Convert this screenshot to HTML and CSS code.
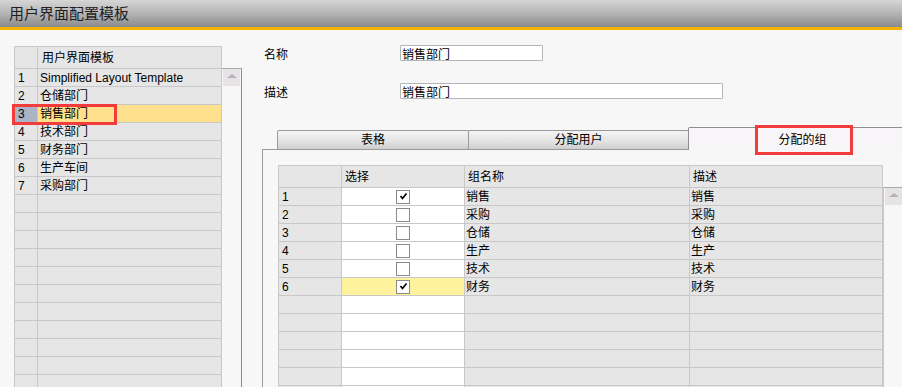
FILE: index.html
```html
<!DOCTYPE html>
<html>
<head>
  <title>用户界面配置模板</title>
  <link rel="stylesheet" href="styles.css">
</head>
<body>
  <div class="window">
    <div class="titlebar">用户界面配置模板</div>

    <div class="content">
      <div class="template-list">
        <div class="list-grid">
          <div class="cell head"></div>
          <div class="cell head name">用户界面模板</div>

          <div class="cell num">1</div><div class="cell name">Simplified Layout Template</div>
          <div class="cell num">2</div><div class="cell name">仓储部门</div>
          <div class="cell num selected-num">3</div><div class="cell name selected">销售部门</div>
          <div class="cell num">4</div><div class="cell name">技术部门</div>
          <div class="cell num">5</div><div class="cell name">财务部门</div>
          <div class="cell num">6</div><div class="cell name">生产车间</div>
          <div class="cell num">7</div><div class="cell name">采购部门</div>
          <div class="cell num"></div><div class="cell name"></div>
          <div class="cell num"></div><div class="cell name"></div>
          <div class="cell num"></div><div class="cell name"></div>
          <div class="cell num"></div><div class="cell name"></div>
          <div class="cell num"></div><div class="cell name"></div>
          <div class="cell num"></div><div class="cell name"></div>
          <div class="cell num"></div><div class="cell name"></div>
          <div class="cell num"></div><div class="cell name"></div>
          <div class="cell num"></div><div class="cell name"></div>
          <div class="cell num"></div><div class="cell name"></div>
          <div class="cell num"></div><div class="cell name"></div>
        </div>
        <div class="scroll-frame">
          <div class="scroll-btn"><span class="arrow-up"></span></div>
        </div>
      </div>

      <div class="details">
        <div class="field-row">
          <span class="field-label">名称</span>
          <input class="field-input short" type="text" value="销售部门">
        </div>
        <div class="field-row">
          <span class="field-label">描述</span>
          <input class="field-input long" type="text" value="销售部门">
        </div>

        <div class="tabs">
          <div class="tab tab-form">表格</div>
          <div class="tab tab-users">分配用户</div>
          <div class="tab tab-groups active">分配的组</div>
        </div>

        <div class="tab-panel">
          <div class="group-grid">
            <div class="gcell head"></div>
            <div class="gcell head">选择</div>
            <div class="gcell head">组名称</div>
            <div class="gcell head">描述</div>

            <div class="gcell">1</div>
            <div class="gcell check-cell"><span class="checkbox"><svg width="11" height="11" viewBox="0 0 11 11"><polyline points="2.5,5 4.5,7.5 8.5,2.5" fill="none" stroke="#000" stroke-width="1.7"/></svg></span></div>
            <div class="gcell text">销售</div>
            <div class="gcell text">销售</div>

            <div class="gcell">2</div>
            <div class="gcell check-cell"><span class="checkbox"></span></div>
            <div class="gcell text">采购</div>
            <div class="gcell text">采购</div>

            <div class="gcell">3</div>
            <div class="gcell check-cell"><span class="checkbox"></span></div>
            <div class="gcell text">仓储</div>
            <div class="gcell text">仓储</div>

            <div class="gcell">4</div>
            <div class="gcell check-cell"><span class="checkbox"></span></div>
            <div class="gcell text">生产</div>
            <div class="gcell text">生产</div>

            <div class="gcell">5</div>
            <div class="gcell check-cell"><span class="checkbox"></span></div>
            <div class="gcell text">技术</div>
            <div class="gcell text">技术</div>

            <div class="gcell">6</div>
            <div class="gcell check-cell current"><span class="checkbox"><svg width="11" height="11" viewBox="0 0 11 11"><polyline points="2.5,5 4.5,7.5 8.5,2.5" fill="none" stroke="#000" stroke-width="1.7"/></svg></span></div>
            <div class="gcell text">财务</div>
            <div class="gcell text">财务</div>

            <div class="gcell"></div><div class="gcell check-cell"></div><div class="gcell"></div><div class="gcell"></div>
            <div class="gcell"></div><div class="gcell check-cell"></div><div class="gcell"></div><div class="gcell"></div>
            <div class="gcell"></div><div class="gcell check-cell"></div><div class="gcell"></div><div class="gcell"></div>
            <div class="gcell"></div><div class="gcell check-cell"></div><div class="gcell"></div><div class="gcell"></div>
            <div class="gcell"></div><div class="gcell check-cell"></div><div class="gcell"></div><div class="gcell"></div>
            <div class="gcell"></div><div class="gcell check-cell"></div><div class="gcell"></div><div class="gcell"></div>
          </div>
          <div class="scroll-frame grid-scroll">
            <div class="scroll-btn"><span class="arrow-up"></span></div>
          </div>
        </div>
      </div>
    </div>

    <div class="mark mark-row"></div>
    <div class="mark mark-tab"></div>
  </div>
</body>
</html>
```

FILE: styles.css
```css
body {
  margin: 0;
  background-color: #f7f7f7;
  font-family: "Liberation Sans", "Noto Sans CJK SC", sans-serif;
  font-size: 12px;
  color: #000;
}

.window {
  position: relative;
  width: 902px;
  height: 387px;
  overflow: hidden;
}

.titlebar {
  height: 27px;
  line-height: 28px;
  padding-left: 9px;
  font-size: 15px;
  color: #1e1e1e;
  background: linear-gradient(to bottom, #d6d6d6, #b0b0b0 55%, #8a8a8a);
  border-bottom: 3px solid #f4b400;
}

.content {
  display: flex;
  height: 357px;
  overflow: hidden;
}

/* left template list */

.template-list {
  display: flex;
  align-items: flex-start;
  padding: 16px 0 0 14px;
}

.list-grid {
  display: grid;
  grid-template-columns: 23px 184px;
  grid-template-rows: 22px;
  grid-auto-rows: 18px;
  border-left: 1px solid #c8c8c8;
  border-top: 1px solid #c8c8c8;
}

.cell {
  box-sizing: border-box;
  border-right: 1px solid #c8c8c8;
  border-bottom: 1px solid #c8c8c8;
  background-color: #e6e6e6;
  line-height: 18px;
  white-space: nowrap;
  overflow: hidden;
}

.cell.head {
  line-height: 22px;
}

.cell.num {
  padding-left: 3px;
}

.cell.name {
  padding-left: 2px;
}

.cell.head.name {
  padding-left: 4px;
}

.cell.selected-num {
  background-color: #a9b4c7;
}

.cell.selected {
  background-color: #ffe08c;
}

.scroll-frame {
  box-sizing: border-box;
  width: 20px;
  height: 400px;
  margin-top: 22px;
  border-top: 1px solid #a8a8a8;
  border-right: 1px solid #8c8c8c;
  padding: 0 1px;
}

.scroll-btn {
  display: flex;
  justify-content: center;
  align-items: center;
  height: 17px;
  background-color: #e6e2e6;
}

.arrow-up {
  width: 0;
  height: 0;
  border-left: 5px solid transparent;
  border-right: 5px solid transparent;
  border-bottom: 4px solid #b6b2b6;
  margin-top: -3px;
}

/* right details */

.details {
  flex: 1;
  padding-left: 20px;
}

.field-row {
  display: flex;
  align-items: center;
  height: 16px;
  margin-top: 15px;
  padding-left: 2px;
}

.field-row + .field-row {
  margin-top: 22px;
}

.field-label {
  width: 136px;
}

.field-input {
  box-sizing: border-box;
  height: 16px;
  padding: 0 1px;
  border: 1px solid #b2b6b6;
  border-radius: 1px;
  background-color: #fff;
  font-family: "Liberation Sans", "Noto Sans CJK SC", sans-serif;
  font-size: 12px;
  color: #000;
}

.field-input.short {
  width: 143px;
}

.field-input.long {
  width: 323px;
}

.tabs {
  display: flex;
  align-items: flex-end;
  height: 22px;
  margin-top: 28px;
  padding-left: 15px;
  border-bottom: 1px solid #9a9a9a;
}

.tab {
  flex: none;
  box-sizing: border-box;
  height: 19px;
  line-height: 19px;
  text-align: center;
  border: 1px solid #9a9a9a;
  border-bottom: none;
  border-radius: 2px 2px 0 0;
  background: linear-gradient(to bottom, #f4f4f4, #e2e2e2 60%, #cecece);
}

.tab + .tab {
  margin-left: -1px;
}

.tab-form {
  width: 192px;
}

.tab-users {
  width: 221px;
}

.tab-groups {
  width: 229px;
}

.tab.active {
  position: relative;
  height: 23px;
  line-height: 25px;
  margin-bottom: -1px;
  background: #f8f5f8;
  border-color: #8e8e8e;
}

.tab-panel {
  display: flex;
  align-items: flex-start;
  height: 300px;
  padding: 15px 0 0 15px;
  border-left: 1px solid #9a9a9a;
}

.group-grid {
  flex: none;
  display: grid;
  grid-template-columns: 63px 123px 225px 193px;
  grid-template-rows: 22px;
  grid-auto-rows: 18px;
  border-left: 1px solid #c8c8c8;
  border-top: 1px solid #c8c8c8;
}

.gcell {
  box-sizing: border-box;
  border-right: 1px solid #c8c8c8;
  border-bottom: 1px solid #c8c8c8;
  background-color: #e6e6e6;
  padding-left: 3px;
  line-height: 18px;
  white-space: nowrap;
}

.gcell.head {
  line-height: 22px;
}

.gcell.text {
  padding-left: 1px;
}

.check-cell {
  display: flex;
  justify-content: center;
  align-items: center;
  padding-left: 0;
  background-color: #fff;
}

.check-cell.current {
  background-color: #fff29c;
}

.checkbox {
  box-sizing: border-box;
  display: flex;
  justify-content: center;
  align-items: center;
  width: 14px;
  height: 14px;
  border: 1px solid #8a8a8a;
  background-color: #fff;
}

.grid-scroll {
  width: 21px;
  border-left: 1px solid #c8c8c8;
  border-right: none;
}

/* annotation frames */

.mark {
  position: absolute;
  box-sizing: border-box;
  border: 3px solid #f23b3b;
}

.mark-row {
  left: 12px;
  top: 104px;
  width: 105px;
  height: 21px;
}

.mark-tab {
  left: 755px;
  top: 125px;
  width: 98px;
  height: 30px;
}
```
